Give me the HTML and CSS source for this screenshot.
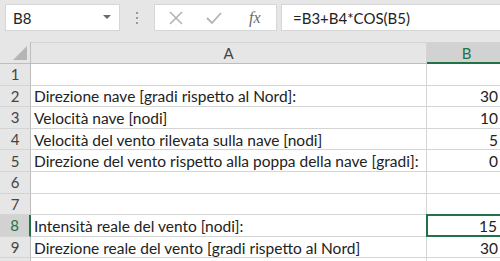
FILE: index.html
```html
<!DOCTYPE html>
<html lang="it">
  <head>
    <meta charset="UTF-8" />
    <title>Foglio</title>
    <link rel="stylesheet" href="styles.css">
  </head>
  <body>
    <div class="excel">
      <div class="formula-bar">
        <div class="name-box">
          <span>B8</span>
          <svg class="caret" width="8" height="5" viewBox="0 0 8 5"><path d="M0 0h8L4 4z" fill="#6b6b6b"/></svg>
        </div>
        <div class="grip"><i></i><i></i><i></i></div>
        <div class="fx-buttons">
          <svg width="14" height="14" viewBox="0 0 14 14"><path d="M1 1l12 12M13 1L1 13" stroke="#b3b3b3" stroke-width="1.6"/></svg>
          <svg width="16" height="14" viewBox="0 0 16 14"><path d="M1 7l5 5L15 2" stroke="#b3b3b3" stroke-width="1.8" fill="none"/></svg>
          <span class="fx">fx</span>
        </div>
        <div class="formula-input">=B3+B4*COS(B5)</div>
      </div>

      <div class="sheet">
        <div class="corner"><span class="triangle"></span></div>
        <div class="col-head">A</div>
        <div class="col-head col-head--active">B</div>

        <div class="row-head">1</div><div class="cell"></div><div class="cell num"></div>
        <div class="row-head">2</div><div class="cell">Direzione nave [gradi rispetto al Nord]:</div><div class="cell num">30</div>
        <div class="row-head">3</div><div class="cell">Velocità nave [nodi]</div><div class="cell num">10</div>
        <div class="row-head">4</div><div class="cell">Velocità del vento rilevata sulla nave [nodi]</div><div class="cell num">5</div>
        <div class="row-head">5</div><div class="cell">Direzione del vento rispetto alla poppa della nave [gradi]:</div><div class="cell num">0</div>
        <div class="row-head">6</div><div class="cell"></div><div class="cell num"></div>
        <div class="row-head">7</div><div class="cell"></div><div class="cell num"></div>
        <div class="row-head row-head--active">8</div><div class="cell">Intensità reale del vento [nodi]:</div><div class="cell num cell--selected">15<span class="handle"></span></div>
        <div class="row-head">9</div><div class="cell">Direzione reale del vento [gradi rispetto al Nord]</div><div class="cell num">30</div>
        <div class="row-head"></div><div class="cell"></div><div class="cell num"></div>
      </div>
    </div>
  </body>
</html>
```

FILE: styles.css
```css
* {
  box-sizing: border-box;
  margin: 0;
  padding: 0;
}
body,
html {
  width: 100%;
  height: 100%;
  overflow: hidden;
}
body {
  font-family: Lato, "Liberation Sans", sans-serif;
  background-color: #e6e6e6;
}
.excel {
  width: 500px;
  height: 261px;
  overflow: hidden;
}

.formula-bar {
  display: flex;
  align-items: center;
  height: 42px;
  padding: 4px 0 11px 5px;
}
.name-box {
  width: 115px;
  height: 27px;
  background-color: #fff;
  border: 1px solid #d6d6d6;
  display: flex;
  align-items: center;
  justify-content: space-between;
  padding: 0 8px 0 7px;
  font-size: 15px;
  color: #222;
}
.grip {
  width: 34px;
  display: flex;
  flex-direction: column;
  align-items: center;
  gap: 3px;
}
.grip i {
  display: block;
  width: 2px;
  height: 2px;
  background-color: #9a9a9a;
}
.fx-buttons {
  width: 123px;
  height: 27px;
  background-color: #fff;
  border: 1px solid #d6d6d6;
  display: flex;
  align-items: center;
  padding-left: 14px;
  gap: 23px;
}
.fx {
  font-family: "Liberation Serif", serif;
  font-style: italic;
  font-size: 16px;
  color: #6a6a6a;
  margin-left: 4px;
}
.formula-input {
  flex: 1;
  height: 27px;
  margin-left: 4px;
  background-color: #fff;
  border: 1px solid #d6d6d6;
  border-right: none;
  display: flex;
  align-items: center;
  padding-left: 11px;
  font-size: 15px;
  color: #222;
}

.sheet {
  display: grid;
  grid-template-columns: 31px 396px 80px;
  grid-template-rows: 22px repeat(10, 21.6px);
  background-color: #fff;
  font-size: 15.5px;
  color: #222;
}
.corner {
  position: relative;
  background-color: #e6e6e6;
  border-right: 1px solid #bdbdbd;
  border-bottom: 1px solid #bdbdbd;
}
.triangle {
  position: absolute;
  right: 3px;
  bottom: 3px;
  width: 0;
  height: 0;
  border-left: 14px solid transparent;
  border-bottom: 14px solid #b5b5b5;
}
.col-head {
  background-color: #e6e6e6;
  border-top: 1px solid #d4d4d4;
  border-right: 1px solid #d4d4d4;
  border-bottom: 1px solid #bdbdbd;
  display: flex;
  align-items: center;
  justify-content: center;
  font-size: 15px;
  color: #444;
}
.col-head--active {
  background-color: #d2d2d2;
  color: #217346;
  border-bottom: 2px solid #217346;
}
.row-head {
  background-color: #e6e6e6;
  border-right: 1px solid #bdbdbd;
  border-bottom: 1px solid #d4d4d4;
  display: flex;
  align-items: center;
  justify-content: center;
  font-size: 15px;
  color: #444;
}
.row-head--active {
  background-color: #d2d2d2;
  color: #217346;
  border-right: 2px solid #217346;
}
.cell {
  border-right: 1px solid #d4d4d4;
  border-bottom: 1px solid #d4d4d4;
  display: flex;
  align-items: center;
  padding: 1px 3px 0 3px;
  white-space: nowrap;
}
.num {
  justify-content: flex-end;
  padding-right: 8px;
}
.cell--selected {
  position: relative;
  border: 2px solid #217346;
  margin-top: -1px;
  margin-left: -1px;
}
.handle {
  position: absolute;
  right: -4px;
  bottom: -4px;
  width: 5px;
  height: 5px;
  background-color: #217346;
  border: 1px solid #fff;
}
```
